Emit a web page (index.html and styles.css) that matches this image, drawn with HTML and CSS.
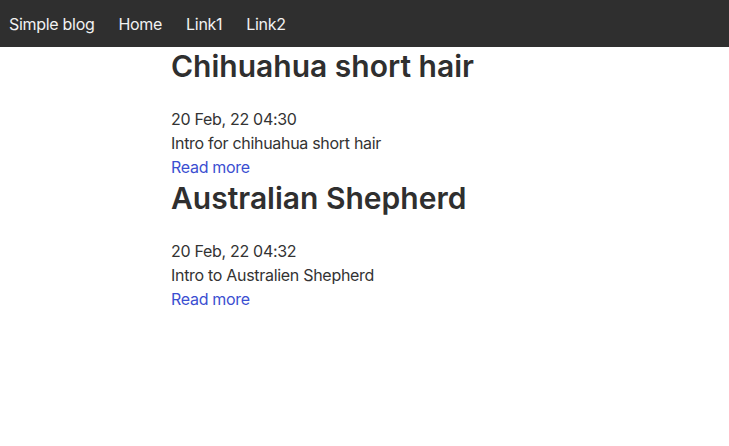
FILE: index.html
```html
<!DOCTYPE html>
<html lang="en">
<head>
<meta charset="utf-8">
<title>Simple blog</title>
<link rel="stylesheet" href="styles.css">
</head>
<body>
<nav class="navbar">
  <a class="brand" href="#">Simple blog</a>
  <a class="nav-link" href="#">Home</a>
  <a class="nav-link" href="#">Link1</a>
  <a class="nav-link" href="#">Link2</a>
</nav>
<main class="content">
  <article class="post">
    <h1 class="post-title">Chihuahua short hair</h1>
    <div class="post-date">20 Feb, 22 04:30</div>
    <div class="post-intro">Intro for chihuahua short hair</div>
    <a class="read-more" href="#">Read more</a>
  </article>
  <article class="post">
    <h1 class="post-title">Australian Shepherd</h1>
    <div class="post-date">20 Feb, 22 04:32</div>
    <div class="post-intro">Intro to Australien Shepherd</div>
    <a class="read-more" href="#">Read more</a>
  </article>
</main>
</body>
</html>
```
FILE: styles.css
```css
* { box-sizing: border-box; }
body {
  margin: 0;
  font-family: Inter, "Noto Sans", sans-serif;
  font-size: 16px;
  line-height: 24px;
  letter-spacing: -0.3px;
  color: #333;
  background: #fff;
}
.navbar {
  height: 47px;
  background: #2f2f2f;
  display: flex;
  align-items: center;
  gap: 24px;
  padding: 0 9px;
}
.navbar a {
  color: #f2f2f2;
  text-decoration: none;
  font-size: 16px;
}
.content {
  padding-left: 171px;
}
.post { display: flex; flex-direction: column; align-items: flex-start; }
.post-title {
  margin: 0 0 22px;
  font-size: 30px;
  line-height: 38px;
  font-weight: 600;
  letter-spacing: 0;
  color: #2f2f2f;
}
.read-more {
  color: #3b4fd1;
  text-decoration: none;
}
```
